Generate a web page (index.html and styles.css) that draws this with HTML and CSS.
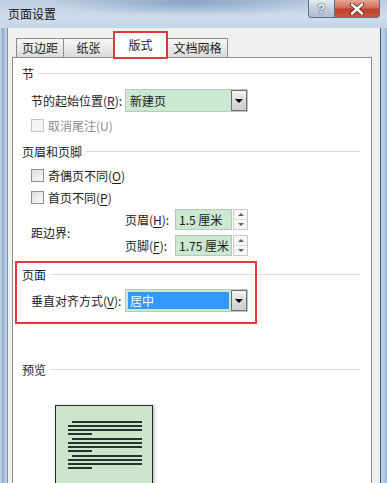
FILE: index.html
```html
<!DOCTYPE html>
<html lang="zh-CN">
<head>
    <meta charset="UTF-8">
    <title>页面设置</title>
    <link rel="stylesheet" href="styles.css">
</head>
<body>
    <div class="window">
        <div class="titlebar">
            <span class="title">页面设置</span>
            <div class="caption">
                <span class="cap-btn help">?</span>
                <span class="cap-btn close">
                    <svg width="16" height="12" viewBox="0 0 16 12">
                        <path d="M3 1.5 L13 10.5 M13 1.5 L3 10.5" stroke="#5a1a12" stroke-width="4.2" stroke-linecap="round"/>
                        <path d="M3 1.5 L13 10.5 M13 1.5 L3 10.5" stroke="#ffffff" stroke-width="2.6" stroke-linecap="round"/>
                    </svg>
                </span>
            </div>
        </div>

        <div class="client">
            <div class="tabs">
                <div class="tab t1">页边距</div>
                <div class="tab t2">纸张</div>
                <div class="tab t3 active">版式</div>
                <div class="tab t4">文档网格</div>
            </div>

            <div class="panel">
                <div class="group-head head-first"><span>节</span></div>
                <div class="field-row row-start">
                    <label class="field-label">节的起始位置(<u>R</u>):</label>
                    <div class="combo">
                        <span class="combo-text">新建页</span>
                        <span class="combo-btn"><span class="arrow-down"></span></span>
                    </div>
                </div>
                <div class="check-row disabled row-endnote">
                    <span class="check"></span><span>取消尾注(U)</span>
                </div>

                <div class="group-head head-hf"><span>页眉和页脚</span></div>
                <div class="check-row row-odd">
                    <span class="check"></span><span>奇偶页不同(<u>O</u>)</span>
                </div>
                <div class="check-row row-first">
                    <span class="check"></span><span>首页不同(<u>P</u>)</span>
                </div>
                <div class="margin-block">
                    <span class="field-label">距边界:</span>
                    <div class="spin-rows">
                        <div class="spin-row">
                            <span class="spin-label">页眉(<u>H</u>):</span>
                            <span class="spin-box">1.5 厘米</span>
                            <span class="spin"><span class="spin-up"></span><span class="spin-down"></span></span>
                        </div>
                        <div class="spin-row">
                            <span class="spin-label">页脚(<u>F</u>):</span>
                            <span class="spin-box">1.75 厘米</span>
                            <span class="spin"><span class="spin-up"></span><span class="spin-down"></span></span>
                        </div>
                    </div>
                </div>

                <div class="page-group">
                    <div class="group-head"><span>页面</span></div>
                    <div class="field-row row-valign">
                        <label class="field-label">垂直对齐方式(<u>V</u>):</label>
                        <div class="combo">
                            <span class="combo-text selected">居中</span>
                            <span class="combo-btn"><span class="arrow-down"></span></span>
                        </div>
                    </div>
                </div>

                <div class="group-head head-preview"><span>预览</span></div>
                <div class="preview-page">
                    <div class="para">
                        <div class="line first"></div>
                        <div class="line"></div>
                        <div class="line"></div>
                        <div class="line short"></div>
                    </div>
                    <div class="para">
                        <div class="line first"></div>
                        <div class="line"></div>
                        <div class="line"></div>
                        <div class="line short"></div>
                    </div>
                    <div class="para">
                        <div class="line first"></div>
                        <div class="line"></div>
                        <div class="line"></div>
                        <div class="line short"></div>
                    </div>
                </div>
            </div>
        </div>
    </div>
</body>
</html>
```

FILE: styles.css
```css
body{
    margin: 0;
    font-family: "Noto Sans CJK SC", "Liberation Sans", sans-serif;
    font-size: 12px;
    color: #1b1b1b;
}
u{
    text-decoration-thickness: 1px;
    text-underline-offset: 2px;
}

.window{
    width: 387px;
    height: 483px;
    overflow: hidden;
    display: flex;
    flex-direction: column;
    background: linear-gradient(90deg, #c9d8ea 0, #8eaacc 3px, #c4d5e9 6px, #c4d5e9 380px, #b7d0ec 383px, #9fb9d8 386px);
}

/* title bar */
.titlebar{
    height: 30px;
    display: flex;
    justify-content: space-between;
    align-items: flex-start;
    padding: 0 7px 0 8px;
    background:
        radial-gradient(ellipse 140px 14px at 190px 2px, rgba(90, 130, 180, 0.55), transparent),
        linear-gradient(180deg, #bccde2, #cfdbea 60%, #c6d5e8);
}
.title{
    line-height: 28px;
    color: #111;
}
.caption{
    display: flex;
}
.cap-btn{
    height: 18px;
    display: flex;
    align-items: center;
    justify-content: center;
    box-sizing: border-box;
    border: 1px solid #5e6f86;
    border-top: none;
}
.help{
    width: 27px;
    border-radius: 0 0 0 4px;
    background: linear-gradient(180deg, #e4ebf3, #c2cfde 50%, #aebfd3);
    color: #fff;
    font-family: "Liberation Sans", sans-serif;
    font-weight: bold;
    font-size: 13px;
    text-shadow: 0 0 2px #2b3c52, 0 0 1px #2b3c52;
}
.close{
    width: 45px;
    border-left: none;
    border-radius: 0 0 4px 0;
    background: linear-gradient(180deg, #e8a595, #d0705d 45%, #c0402c 55%, #d2573e);
}

/* client area */
.client{
    flex: 1;
    margin: 0 6px 0 7px;
    border-left: 1px solid #7a8ba0;
    border-right: 1px solid #42566e;
    background: #f0f0f0;
    padding: 3px 8px 0 4px;
    display: flex;
    flex-direction: column;
}

.tabs{
    height: 26px;
    display: flex;
    align-items: flex-end;
    padding-left: 4px;
}
.tab{
    height: 19px;
    box-sizing: border-box;
    border: 1px solid #8d8d8d;
    border-bottom: none;
    margin-right: -1px;
    background: linear-gradient(180deg, #f7f7f7, #e9e9e9 50%, #dadada);
    text-align: center;
    line-height: 18px;
}
.t1{ width: 48px; }
.t2{ width: 51px; }
.t3{ width: 55px; }
.t4{ width: 61px; }
.tab.active{
    height: 28px;
    margin-bottom: -2px;
    border: 2px solid #e2373b;
    background: #fff;
    position: relative;
    z-index: 1;
    line-height: 24px;
}

.panel{
    flex: 1;
    background: #fff;
    border: 1px solid #898c95;
    padding: 0 11px 0 9px;
}

.group-head{
    height: 20px;
    display: flex;
    align-items: center;
}
.group-head::after{
    content: "";
    flex: 1;
    height: 1px;
    margin-left: 4px;
    background: #dcdcdc;
}
.head-first{ margin-top: 5px; }
.head-hf{ margin-top: 7px; }
.head-preview{ margin-top: 47px; }

.field-row{
    display: flex;
    align-items: center;
    padding-left: 9px;
    height: 23px;
}
.row-start{ margin-top: 6px; }
.row-valign{ margin-top: 5px; }
.field-label{
    width: 94px;
    white-space: nowrap;
}

.combo{
    width: 123px;
    height: 23px;
    box-sizing: border-box;
    border: 1px solid #bccabd;
    background: #cbe8d0;
    display: flex;
    align-items: stretch;
}
.combo-text{
    flex: 1;
    padding-left: 4px;
    line-height: 21px;
}
.combo-text.selected{
    margin: 2px;
    padding-left: 2px;
    background: #3399ff;
    color: #fff;
    line-height: 17px;
}
.combo-btn{
    width: 16px;
    box-sizing: border-box;
    border: 1px solid #6f6f6f;
    background: linear-gradient(180deg, #f2f2f2, #dcdcdc 50%, #cfcfcf);
    display: flex;
    align-items: center;
    justify-content: center;
}
.arrow-down{
    width: 0;
    height: 0;
    border-left: 4px solid transparent;
    border-right: 4px solid transparent;
    border-top: 4px solid #000;
}

.check-row{
    display: flex;
    align-items: center;
    padding-left: 9px;
    height: 18px;
    gap: 4px;
}
.check{
    width: 13px;
    height: 13px;
    box-sizing: border-box;
    border: 1px solid #8e8f8f;
    background: linear-gradient(135deg, #dedede, #f9f9f9);
}
.disabled{
    color: #8d8d8d;
}
.disabled .check{
    border-color: #c4c4c4;
    background: #f4f4f4;
}
.row-endnote{ margin-top: 4px; }
.row-odd{ margin-top: 5px; }
.row-first{ margin-top: 4px; }

.margin-block{
    margin-top: 3px;
    display: flex;
    align-items: center;
    padding-left: 9px;
}
.spin-rows{
    display: flex;
    flex-direction: column;
    gap: 5px;
}
.spin-row{
    display: flex;
    align-items: center;
    height: 21px;
}
.spin-label{
    width: 50px;
    white-space: nowrap;
}
.spin-box{
    width: 57px;
    height: 21px;
    box-sizing: border-box;
    border: 1px solid #b9c7ba;
    background: #cbe8d0;
    padding-left: 3px;
    line-height: 19px;
    white-space: nowrap;
    overflow: hidden;
}
.spin{
    width: 15px;
    height: 21px;
    margin-left: 1px;
    box-sizing: border-box;
    border: 1px solid #c9c9c9;
    display: flex;
    flex-direction: column;
    background: #f7f7f7;
}
.spin-up, .spin-down{
    flex: 1;
    display: flex;
    align-items: center;
    justify-content: center;
}
.spin-up{
    border-bottom: 1px solid #dcdcdc;
}
.spin-up::before{
    content: "";
    border-left: 3px solid transparent;
    border-right: 3px solid transparent;
    border-bottom: 3px solid #56606e;
}
.spin-down::before{
    content: "";
    border-left: 3px solid transparent;
    border-right: 3px solid transparent;
    border-top: 3px solid #56606e;
}

/* red marker around the page group */
.page-group{
    margin-top: 8px;
    position: relative;
}
.page-group::before{
    content: "";
    position: absolute;
    left: -7px;
    top: -3px;
    width: 242px;
    height: 63px;
    box-sizing: border-box;
    border: 2px solid #e2373b;
}

.preview-page{
    margin-top: 26px;
    margin-left: 33px;
    width: 98px;
    height: 96px;
    box-sizing: border-box;
    border: 1px solid #2a2a2a;
    background: #cbe6cc;
    box-shadow: 1px 1px 3px rgba(0, 0, 0, 0.35);
    padding: 15px 0 0 12px;
}
.para{
    margin-bottom: 3px;
}
.line{
    width: 74px;
    height: 2px;
    margin-bottom: 2px;
    background: #26352a;
}
.line.first{
    margin-left: 4px;
    width: 70px;
}
.line.short{
    width: 24px;
}
```
